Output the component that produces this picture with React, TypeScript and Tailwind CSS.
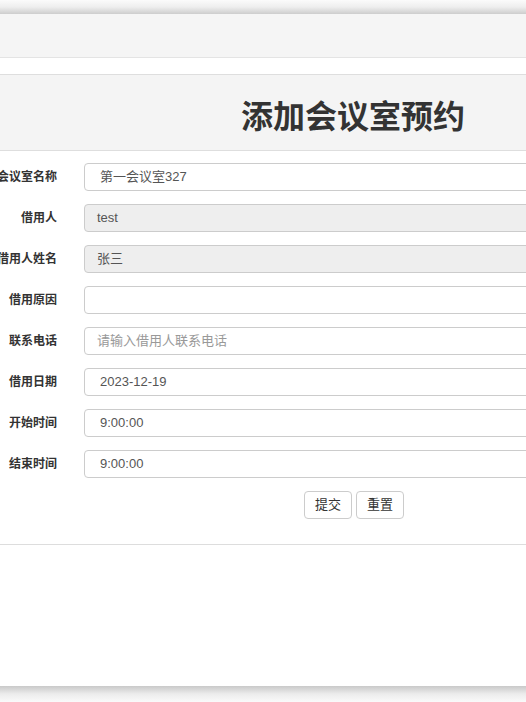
import React from "react";

const rows: { label: string; value: string; disabled?: boolean; placeholder?: boolean; pad?: string }[] = [
  { label: "会议室名称", value: "第一会议室327", pad: "pl-[15px]" },
  { label: "借用人", value: "test", disabled: true },
  { label: "借用人姓名", value: "张三", disabled: true },
  { label: "借用原因", value: "" },
  { label: "联系电话", value: "请输入借用人联系电话", placeholder: true },
  { label: "借用日期", value: "2023-12-19", pad: "pl-[15px]" },
  { label: "开始时间", value: "9:00:00", pad: "pl-[15px]" },
  { label: "结束时间", value: "9:00:00", pad: "pl-[15px]" },
];

export default function App() {
  return (
    <div
      className="w-[526px] h-[702px] overflow-hidden bg-white flex flex-col"
      style={{ fontFamily: '"Liberation Sans", "Noto Sans CJK SC", sans-serif' }}
    >
      <div className="h-[14px] shrink-0 bg-gradient-to-b from-[#fbfbfb] via-[#eeeeee] to-[#cdcdcd]" />
      <div className="h-[44px] shrink-0 bg-[#f5f5f5] border-b border-[#e4e4e4]" />
      <div className="h-[16px] shrink-0 bg-white" />
      <div className="h-[77px] shrink-0 bg-[#f4f4f4] border-y border-[#dedede] flex items-center justify-center pl-[180px] pt-[8px]">
        <h1 className="text-[32px] font-bold text-[#333333] leading-none whitespace-nowrap">添加会议室预约</h1>
      </div>
      <div className="pt-[12px] pb-[25px] border-b border-[#dddddd] flex flex-col gap-[13px] shrink-0">
        {rows.map((r) => (
          <div key={r.label} className="flex items-center h-[28px] gap-[27px]">
            <div className="w-[57px] shrink-0 flex justify-end">
              <span className="text-[12px] font-bold text-[#333333] whitespace-nowrap">{r.label}</span>
            </div>
            <div
              className={`w-[480px] shrink-0 h-[28px] rounded-[4px] border border-[#cccccc] flex items-center ${r.pad ?? "pl-[12px]"} text-[13px] ${
                r.disabled ? "bg-[#eeeeee]" : "bg-white"
              } ${r.placeholder ? "text-[#999999]" : "text-[#555555]"}`}
            >
              {r.value}
            </div>
          </div>
        ))}
        <div className="flex pl-[304px] gap-[4px]">
          <button className="w-[48px] h-[28px] rounded-[4px] border border-[#cccccc] bg-white text-[13px] text-[#333333]">提交</button>
          <button className="w-[48px] h-[28px] rounded-[4px] border border-[#cccccc] bg-white text-[13px] text-[#333333]">重置</button>
        </div>
      </div>
      <div className="flex-1 bg-white" />
      <div className="h-[16px] shrink-0 bg-gradient-to-b from-[#c9c9c9] via-[#ececec] to-[#fafafa]" />
    </div>
  );
}
